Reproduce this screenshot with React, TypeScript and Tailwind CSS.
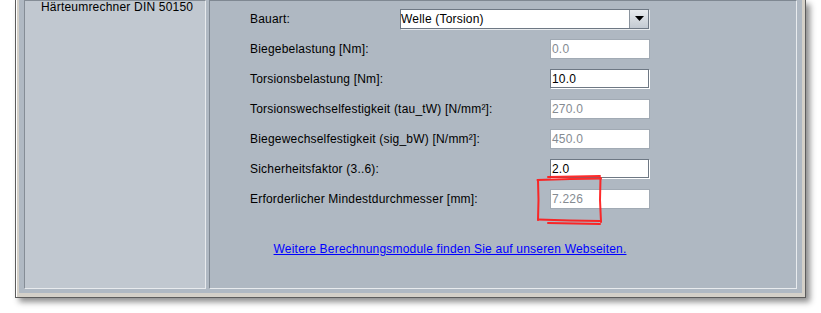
import React from "react";

const rows: { label: string; value: string; editable: boolean }[] = [
  { label: "Biegebelastung [Nm]:", value: "0.0", editable: false },
  { label: "Torsionsbelastung [Nm]:", value: "10.0", editable: true },
  { label: "Torsionswechselfestigkeit (tau_tW) [N/mm²]:", value: "270.0", editable: false },
  { label: "Biegewechselfestigkeit (sig_bW) [N/mm²]:", value: "450.0", editable: false },
  { label: "Sicherheitsfaktor (3..6):", value: "2.0", editable: true },
  { label: "Erforderlicher Mindestdurchmesser [mm]:", value: "7.226", editable: false },
];

function Field({ value, editable }: { value: string; editable: boolean }) {
  if (editable) {
    return (
      <div className="w-[100px] h-[20px]">
        <div className="w-[99px] h-[19px] border border-[#6e7884] bg-white shadow-[1px_1px_0_0_#ffffff] flex items-center pl-[1px] text-black">
          {value}
        </div>
      </div>
    );
  }
  return (
    <div className="w-[100px] h-[20px] border border-[#a1aab4] bg-white flex items-center pl-[1px] text-[#858b92]">
      {value}
    </div>
  );
}

export default function App() {
  return (
    <div
      className="relative w-[821px] h-[313px] bg-white overflow-hidden text-[12px] leading-[14px] tracking-[0.2px] text-black"
      style={{ fontFamily: '"Liberation Sans", Arial, sans-serif' }}
    >
      <div className="ml-[15px] w-[791px] h-[298px] border-l border-r border-b border-[#5c5c5c] bg-[#d4d0c8] shadow-[4px_4px_6px_rgba(0,0,0,0.45)] flex">
        <div className="flex-1 flex border-l border-white pl-[2px] pr-[3px] pb-[4px]">
          <div className="flex-1 flex bg-[#b0b9c3] pl-[5px] pr-[5px] pb-[4px] gap-[3px]">
            {/* left panel */}
            <div className="w-[182px] border-t border-l border-[#858d96] border-r-[#e8ebee] border-b-[#e8ebee] border-r border-b bg-[#c1c8d0] overflow-hidden">
              <div className="-mt-[1px] pl-[16px] whitespace-nowrap">Härteumrechner DIN 50150</div>
            </div>
            {/* right panel */}
            <div className="w-[588px] border-t border-l border-[#7f8892] border-r border-b border-r-[#e8ebee] border-b-[#e8ebee] bg-[#afb8c2] pl-[40px] pt-[8px]">
              <div className="w-[400px] flex flex-col gap-[10px]">
                <div className="h-[20px] flex items-center justify-between">
                  <span className="whitespace-nowrap">Bauart:</span>
                  <div className="w-[250px] h-[21px]">
                    <div className="w-[249px] h-[20px] border border-[#6e7884] bg-white shadow-[1px_1px_0_0_#e8ebee] flex">
                      <div className="flex-1 flex items-center pl-[0px]">Welle (Torsion)</div>
                      <div className="w-[19px] h-full border-l border-[#8a939d] bg-gradient-to-b from-[#e9ecef] to-[#c3cad2] flex items-center justify-center">
                        <svg width="9" height="5" viewBox="0 0 9 5">
                          <path d="M0 0 H9 L4.5 5 Z" fill="#000" />
                        </svg>
                      </div>
                    </div>
                  </div>
                </div>
                {rows.map((r) => (
                  <div key={r.label} className="h-[20px] flex items-center justify-between">
                    <span className="whitespace-nowrap">{r.label}</span>
                    <Field value={r.value} editable={r.editable} />
                  </div>
                ))}
              </div>
              <div className="w-[400px] mt-[33px] text-center">
                <a href="#" className="text-[#0000ff] underline whitespace-nowrap">
                  Weitere Berechnungsmodule finden Sie auf unseren Webseiten.
                </a>
              </div>
            </div>
          </div>
        </div>
      </div>

      {/* hand-drawn red annotation */}
      <svg
        className="absolute left-0 top-0 pointer-events-none"
        width="821"
        height="313"
        viewBox="0 0 821 313"
      >
        <g stroke="#ff1a1a" strokeWidth="2" fill="none" strokeLinecap="round" strokeLinejoin="round" opacity="0.92">
          <path d="M548 177 L575 176.5 L600 176" />
          <path d="M537.5 180 L570 179 L601 178.5" />
          <path d="M538 180 L538.5 200 L538 220" />
          <path d="M600.5 178 L600 200 L601 222" />
          <path d="M538 219.5 L570 220.5 L600.5 221" />
          <path d="M548 223 L575 223.5 L600 224" />
        </g>
      </svg>
    </div>
  );
}
